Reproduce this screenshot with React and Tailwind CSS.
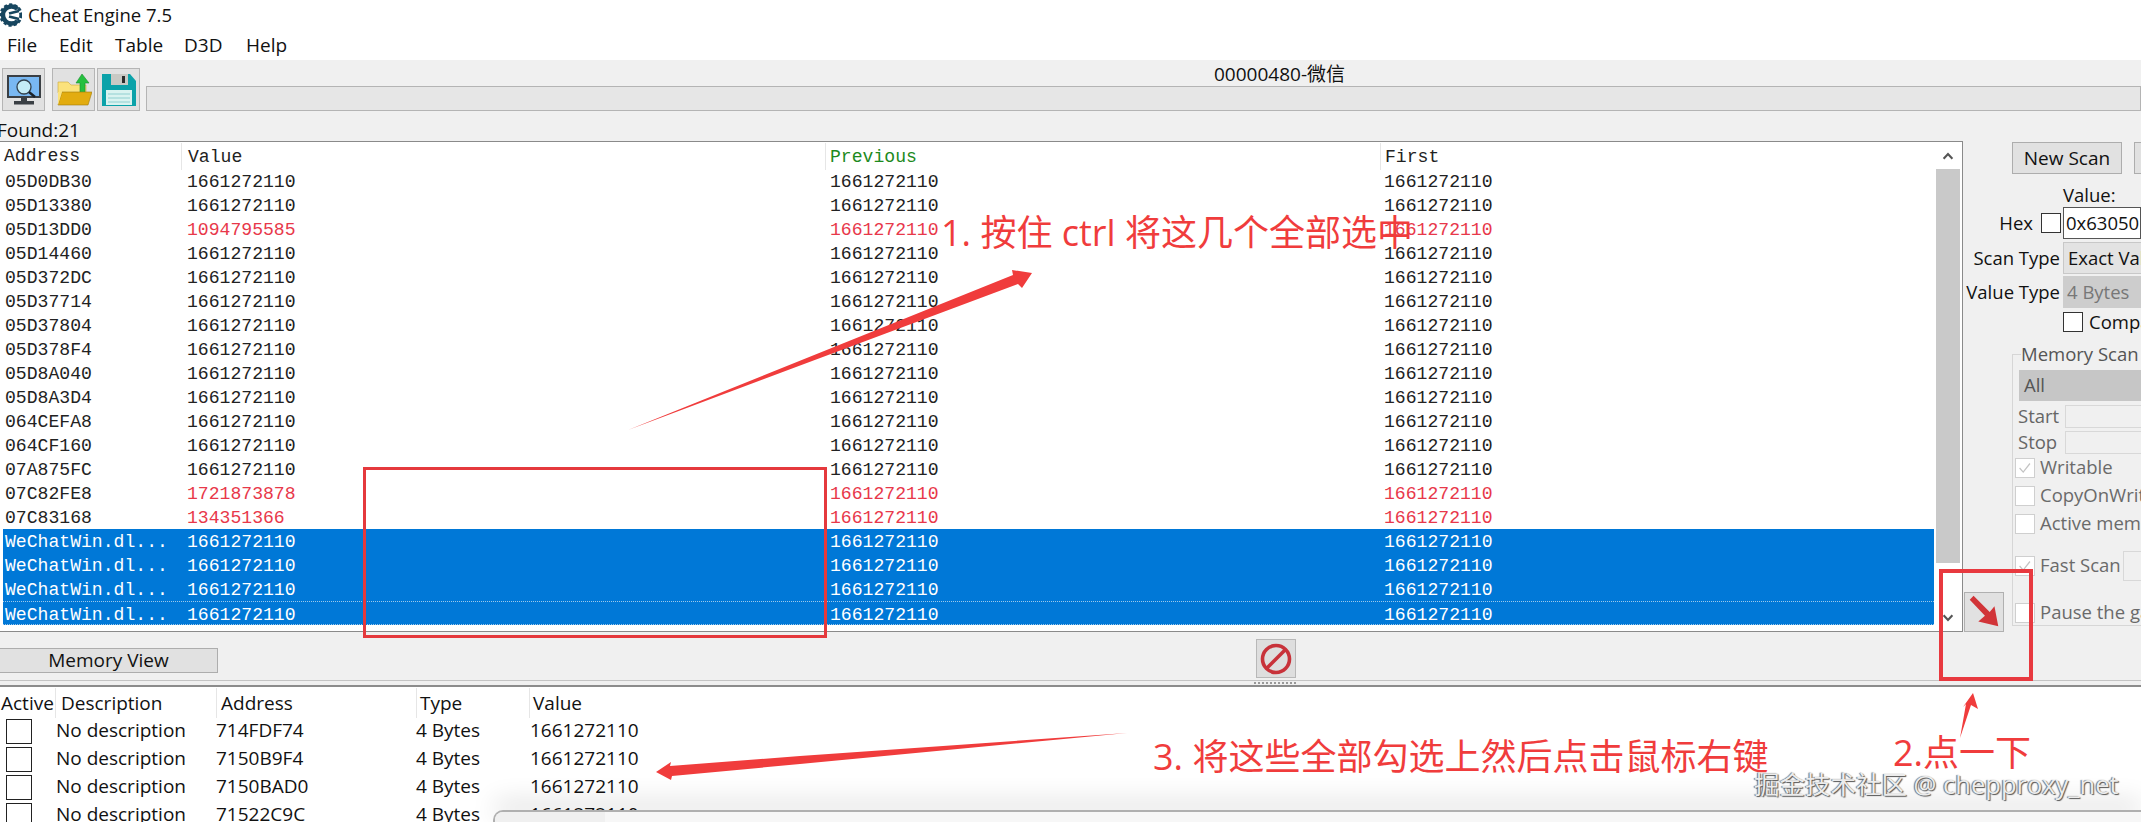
import React from 'react';

const V = '1661272110';
const rows = [
  ['05D0DB30', V],
  ['05D13380', V],
  ['05D13DD0', '1094795585', true],
  ['05D14460', V],
  ['05D372DC', V],
  ['05D37714', V],
  ['05D37804', V],
  ['05D378F4', V],
  ['05D8A040', V],
  ['05D8A3D4', V],
  ['064CEFA8', V],
  ['064CF160', V],
  ['07A875FC', V],
  ['07C82FE8', '1721873878', true],
  ['07C83168', '134351366', true],
];

const saved = ['714FDF74', '7150B9F4', '7150BAD0', '71522C9C'];

const listCols = 'grid grid-cols-[181px_644px_555px_1fr]';
const selCols = 'grid grid-cols-[178px_644px_555px_1fr]';
const tableCols = 'grid grid-cols-[55px_161px_200px_113px_1fr]';

const Logo = () => (
  <svg viewBox="0 0 22 24" className="w-[22px] h-[24px] -ml-[1px]" fill="none" stroke="#17465f">
    <circle cx="11" cy="12" r="10" strokeWidth="3.4" strokeDasharray="3 2" />
    <path d="M17.5 6 A8.5 8.5 0 1 0 17.5 18" strokeWidth="4.4" />
    <path d="M9 10.5 L19 8 M9 13.5 L19 16" strokeWidth="2.8" />
  </svg>
);

const MonitorIcon = () => (
  <svg viewBox="0 0 36 32" className="w-[36px] h-[32px]">
    <rect x="1" y="1" width="34" height="23" fill="#3a3f44" />
    <rect x="3" y="3" width="30" height="19" fill="#79b8f2" />
    <rect x="15" y="24" width="6" height="4" fill="#3a3f44" />
    <rect x="8" y="27" width="20" height="3.5" fill="#3a3f44" />
    <circle cx="18" cy="13" r="7" fill="#c4ecf6" stroke="#33424d" strokeWidth="1.3" />
    <path d="M23 18 L29 23" stroke="#1c2228" strokeWidth="2.4" />
  </svg>
);

const FolderIcon = () => (
  <svg viewBox="0 0 36 34" className="w-[36px] h-[34px]">
    <path d="M2 9 H12 L15 12 H30 V20 H2 Z" fill="#fbe27c" stroke="#c9a93a" strokeWidth="0.6" />
    <path d="M20 10 L26 1 L33 10 H29 V20 H24 V10 Z" fill="#25c03f" stroke="#1c8f2f" strokeWidth="0.6" />
    <path d="M2 32 L6 19 H36 L32 32 Z" fill="#e2ac10" stroke="#a07a0a" strokeWidth="0.6" />
    <path d="M2 10 V32 L6 19 H2" fill="#fbe27c" />
  </svg>
);

const DiskIcon = () => (
  <svg viewBox="0 0 36 34" className="w-[36px] h-[34px]">
    <path d="M1 1 H29 L35 8 V33 H1 Z" fill="#0ba2a9" />
    <rect x="10" y="1" width="17" height="11" fill="#c9c9c4" />
    <rect x="21" y="3" width="3" height="7" fill="#2c2c2c" />
    <rect x="5" y="17" width="26" height="15" fill="#d9f3f0" />
    <path d="M7 21 H29 M7 25 H29 M7 29 H29" stroke="#8fcfd0" strokeWidth="1" />
  </svg>
);

const ToolButton = ({ children }) => (
  <div className="w-[43px] h-[43px] bg-[#e1e1e1] border border-[#b5b5b5] flex items-center justify-center">
    {children}
  </div>
);

const Check = ({ dim, checked, className = '' }) => (
  <div className={`w-[20px] h-[20px] shrink-0 bg-white border flex items-center justify-center ${dim ? 'border-[#cfcfcf]' : 'border-[#333]'} ${className}`}>
    {checked && (
      <svg viewBox="0 0 20 20" className="w-[18px] h-[18px]" fill="none" stroke="#c4c4c4" strokeWidth="1.4">
        <path d="M4 10 L8 14.5 L15.5 5" />
      </svg>
    )}
  </div>
);

const CheckRow = ({ label, checked, className = '' }) => (
  <div className={`flex items-center h-[20px] gap-[5px] text-[#6a6a6a] whitespace-nowrap ${className}`}>
    <Check dim checked={checked} />
    <span className="-mt-[2px]">{label}</span>
  </div>
);

const Annotations = () => (
  <>
    <svg viewBox="0 0 2141 822" className="absolute inset-0 w-[2141px] h-[822px] pointer-events-none" fill="#f03c3c">
      <polygon points="628,430 1013,275 1012,270 1032,273 1022,288 1018,284" />
      <polygon points="656,772 671,762 670,766 800,756 1127,733 800,764 672,776 671,780" />
      <polygon points="1973,693 1978,709 1971,705 1960,738 1966,704 1963,707" />
    </svg>
    <div className="absolute left-[363px] top-[467px] w-[464px] h-[171px] border-[3px] border-[#e5393d]" />
    <div className="absolute left-[1939px] top-[569px] w-[94px] h-[112px] border-[4px] border-[#e8393f]" />
    <div className="absolute left-[941px] top-[213px] text-[36px] leading-[40px] text-[#f03c3c] whitespace-nowrap">1. 按住 ctrl 将这几个全部选中</div>
    <div className="absolute left-[1153px] top-[737px] text-[36px] leading-[40px] text-[#f03c3c] whitespace-nowrap">3. 将这些全部勾选上然后点击鼠标右键</div>
    <div className="absolute left-[1893px] top-[733px] text-[36px] leading-[40px] text-[#f03c3c] whitespace-nowrap">2.点一下</div>
    <div className="absolute left-[1754px] top-[768px] text-[25.5px] leading-[32px] text-[#ececec] whitespace-nowrap [text-shadow:1px_1px_1px_#555,-1px_0_1px_#666]">掘金技术社区 @ chepproxy_net</div>
  </>
);

export default function App() {
  return (
    <div className="relative w-[2141px] h-[822px] overflow-hidden flex flex-col bg-[#f0f0f0] text-[#111] text-[19px] font-['Open_Sans','Noto_Sans_CJK_SC',sans-serif]">
      {/* title + menu */}
      <div className="h-[28px] bg-white flex items-center pl-[1px] pt-[1px] gap-[6px] text-[18.5px] shrink-0">
        <Logo />
        <span>Cheat Engine 7.5</span>
      </div>
      <div className="h-[32px] bg-white flex items-center pl-[7px] pt-[3px] shrink-0">
        <span className="w-[52px]">File</span>
        <span className="w-[56px]">Edit</span>
        <span className="w-[69px]">Table</span>
        <span className="w-[62px]">D3D</span>
        <span>Help</span>
      </div>

      {/* toolbar */}
      <div className="h-[60px] flex shrink-0 pt-[8px] pl-[2px]">
        <ToolButton><MonitorIcon /></ToolButton>
        <div className="ml-[7px]"><ToolButton><FolderIcon /></ToolButton></div>
        <div className="ml-[2px]"><ToolButton><DiskIcon /></ToolButton></div>
        <div className="ml-[6px] flex-1 flex flex-col">
          <div className="h-[18px] pl-[1068px] text-[19px] leading-[13px] whitespace-nowrap">00000480-微信</div>
          <div className="h-[25px] bg-[#e6e6e6] border border-[#b4b4b4]" />
        </div>
      </div>
      <div className="h-[21px] -ml-[3px] leading-[21px] shrink-0">Found:21</div>

      {/* found list + scan panel */}
      <div className="h-[491px] flex shrink-0">
        <div className="w-[1963px] shrink-0 bg-white border-t border-r border-b border-[#8a8a8a] flex font-['Liberation_Mono',monospace] text-[18.1px] text-[#222]">
          <div className="w-[1934px] shrink-0">
            <div className={`${listCols} h-[27px] items-center`}>
              <span className="pl-[4px] leading-[29px]">Address</span>
              <span className="pl-[6px] border-l border-[#e6e6e6] h-[27px] leading-[29px]">Value</span>
              <span className="pl-[4px] border-l border-[#e6e6e6] h-[27px] leading-[29px] text-[#1d8a1d]">Previous</span>
              <span className="pl-[4px] border-l border-[#e6e6e6] h-[27px] leading-[29px]">First</span>
            </div>
            {rows.map(([addr, val, red]) => (
              <div key={addr} className={`${listCols} h-[24px] items-center pb-[1px]`}>
                <span className="pl-[5px]">{addr}</span>
                <span className={`pl-[6px] ${red ? 'text-[#e8384a]' : ''}`}>{val}</span>
                <span className={`pl-[5px] ${red ? 'text-[#e8384a]' : ''}`}>{V}</span>
                <span className={`pl-[4px] ${red ? 'text-[#e8384a]' : ''}`}>{V}</span>
              </div>
            ))}
            {[0, 1, 2, 3].map((i) => (
              <div
                key={i}
                className={`${selCols} h-[24px] items-center ml-[3px] pb-[1px] text-white bg-[#0078d7] ${i === 3 ? 'border-t border-b border-dotted border-[#9cc8ea]' : ''}`}
              >
                <span className="pl-[2px]">WeChatWin.dl...</span>
                <span className="pl-[6px]">{V}</span>
                <span className="pl-[5px]">{V}</span>
                <span className="pl-[4px]">{V}</span>
              </div>
            ))}
          </div>
          <div className="ml-[2px] w-[24px] flex flex-col">
            <div className="h-[27px] flex items-center justify-center">
              <svg viewBox="0 0 14 10" className="w-[12px] h-[8px]" fill="none" stroke="#555" strokeWidth="2.6"><path d="M1.5 8.5 L7 2.5 L12.5 8.5" /></svg>
            </div>
            <div className="h-[394px] bg-[#c9c9c9]" />
            <div className="flex-1 flex items-center justify-center pt-[42px]">
              <svg viewBox="0 0 14 10" className="w-[12px] h-[8px]" fill="none" stroke="#555" strokeWidth="2.6"><path d="M1.5 1.5 L7 7.5 L12.5 1.5" /></svg>
            </div>
          </div>
        </div>

        {/* right panel */}
        <div className="flex-1 min-w-0 overflow-hidden text-[18.5px]">
          <div className="mt-[1px] ml-[49px] flex gap-[12px] h-[32px] w-[300px] text-[19px]">
            <div className="w-[110px] bg-[#e1e1e1] border border-[#adadad] flex items-center justify-center">New Scan</div>
            <div className="w-[100px] bg-[#e1e1e1] border border-[#adadad]" />
          </div>
          <div className="h-[33px] ml-[100px] leading-[41px]">Value:</div>
          <div className="flex h-[32px] items-center">
            <span className="w-[70px] shrink-0 text-right">Hex</span>
            <Check className="ml-[8px]" />
            <div className="ml-[2px] flex-1 h-[32px] bg-white border border-[#555] pl-[2px] leading-[29px] whitespace-nowrap">0x63050</div>
          </div>
          <div className="flex h-[32px] items-center mt-[3px]">
            <span className="w-[100px] shrink-0 text-right pr-[3px] whitespace-nowrap">Scan Type</span>
            <div className="flex-1 h-[32px] bg-[#e3e3e3] border border-[#c8c8c8] pl-[4px] leading-[29px] whitespace-nowrap">Exact Value</div>
          </div>
          <div className="flex h-[32px] items-center mt-[2px]">
            <span className="w-[100px] shrink-0 text-right pr-[3px] whitespace-nowrap">Value Type</span>
            <div className="flex-1 h-[32px] bg-[#cdcdcd] pl-[4px] leading-[31px] text-[#777] whitespace-nowrap">4 Bytes</div>
          </div>
          <div className="flex items-center h-[20px] mt-[4px] ml-[100px] gap-[6px] whitespace-nowrap">
            <Check />
            <span>Compare to first scan</span>
          </div>

          <div className="flex mt-[22px] h-[278px]">
            <div className="w-[49px] shrink-0 flex items-end pl-[1px]">
              <div className="w-[40px] h-[40px] bg-[#e1e1e1] border border-[#b0b0b0] flex items-center justify-center">
                <svg viewBox="0 0 40 40" className="w-[38px] h-[38px]" fill="#d13438">
                  <polygon points="5,7 9,3 26,20 31,14 35,35 14,30 21,24" />
                </svg>
              </div>
            </div>
            <div className="flex-1 h-[272px] border-l border-t border-b border-[#d6d6d6] pl-[6px] text-[#666] whitespace-nowrap">
              <div className="-mt-[15px] h-[29px] leading-[28px] ml-[2px] text-[#555]"><span className="bg-[#f0f0f0] pr-[4px]">Memory Scan Options</span></div>
              <div className="mt-[1px] h-[31px] bg-[#c6c6c6] pl-[5px] leading-[30px] text-[#555]">All</div>
              <div className="flex h-[23px] items-center mt-[4px] -ml-[1px]">
                <span className="w-[47px] -mt-[2px]">Start</span>
                <div className="flex-1 h-[23px] border border-[#d8d8d8]" />
              </div>
              <div className="flex h-[23px] items-center mt-[3px] -ml-[1px]">
                <span className="w-[47px] -mt-[2px]">Stop</span>
                <div className="flex-1 h-[23px] border border-[#d8d8d8]" />
              </div>
              <CheckRow label="Writable" checked className="mt-[4px] -ml-[4px]" />
              <CheckRow label="CopyOnWrite" className="mt-[8px] -ml-[4px]" />
              <CheckRow label="Active memory only" className="mt-[8px] -ml-[4px]" />
              <div className="flex items-center h-[30px] mt-[17px] -ml-[4px] gap-[5px] text-[#6a6a6a]">
                <Check dim checked />
                <span className="w-[78px] -mt-[2px]">Fast Scan</span>
                <div className="flex-1 h-[30px] border border-[#d8d8d8]" />
              </div>
              <CheckRow label="Pause the game while scanning" className="mt-[22px] -ml-[4px]" />
            </div>
          </div>
        </div>
      </div>

      {/* middle bar */}
      <div className="h-[48px] flex shrink-0 relative">
        <div className="mt-[16px] w-[218px] h-[25px] bg-[#e1e1e1] border border-[#adadad] border-l-0 flex items-center justify-center">Memory View</div>
        <div className="ml-[1038px] mt-[7px] w-[40px] h-[39px] bg-[#dedede] border border-[#b8b8b8] flex items-center justify-center">
          <svg viewBox="0 0 32 32" className="w-[32px] h-[32px]" fill="none" stroke="#c8323a" strokeWidth="3.6">
            <circle cx="16" cy="16" r="13.5" />
            <path d="M7 25 L25 7" />
          </svg>
        </div>
      </div>
      <div className="h-[7px] border-t border-b-2 border-t-[#c4c4c4] border-b-[#8c8c8c] shrink-0 pl-[1254px] flex items-center">
        <div className="w-[42px] h-[2px] border-t-2 border-dotted border-[#999]" />
      </div>

      {/* address table */}
      <div className="flex-1 bg-white overflow-hidden">
        <div className={`${tableCols} h-[29px] leading-[30px] mt-[1px]`}>
          <span className="pl-[1px]">Active</span>
          <span className="pl-[5px] border-l border-[#e6e6e6] whitespace-nowrap">Description</span>
          <span className="pl-[4px] border-l border-[#e6e6e6]">Address</span>
          <span className="pl-[3px] border-l border-[#e6e6e6]">Type</span>
          <span className="pl-[3px] border-l border-[#e6e6e6]">Value</span>
        </div>
        {saved.map((addr) => (
          <div key={addr} className={`${tableCols} h-[28px] items-center`}>
            <span className="pl-[6px]"><span className="block w-[26px] h-[25px] border border-[#222] bg-white" /></span>
            <span className="pl-[1px] -mt-[2px] whitespace-nowrap">No description</span>
            <span className="-mt-[2px]">{addr}</span>
            <span className="-mt-[2px]">4 Bytes</span>
            <span className="pl-[1px] -mt-[2px]">{V}</span>
          </div>
        ))}
      </div>

      {/* window that lies over the bottom edge */}
      <div className="absolute left-[493px] top-[810px] right-0 bottom-0 bg-[#f7f7f7] border-t-[2px] border-l-[2px] border-[#b0b0b0] rounded-tl-[10px] shadow-[0_-8px_26px_rgba(0,0,0,0.16)]">
        <div className="w-[110px] h-full bg-[#f0f0f0] rounded-tl-[8px]" />
      </div>

      <Annotations />
    </div>
  );
}
